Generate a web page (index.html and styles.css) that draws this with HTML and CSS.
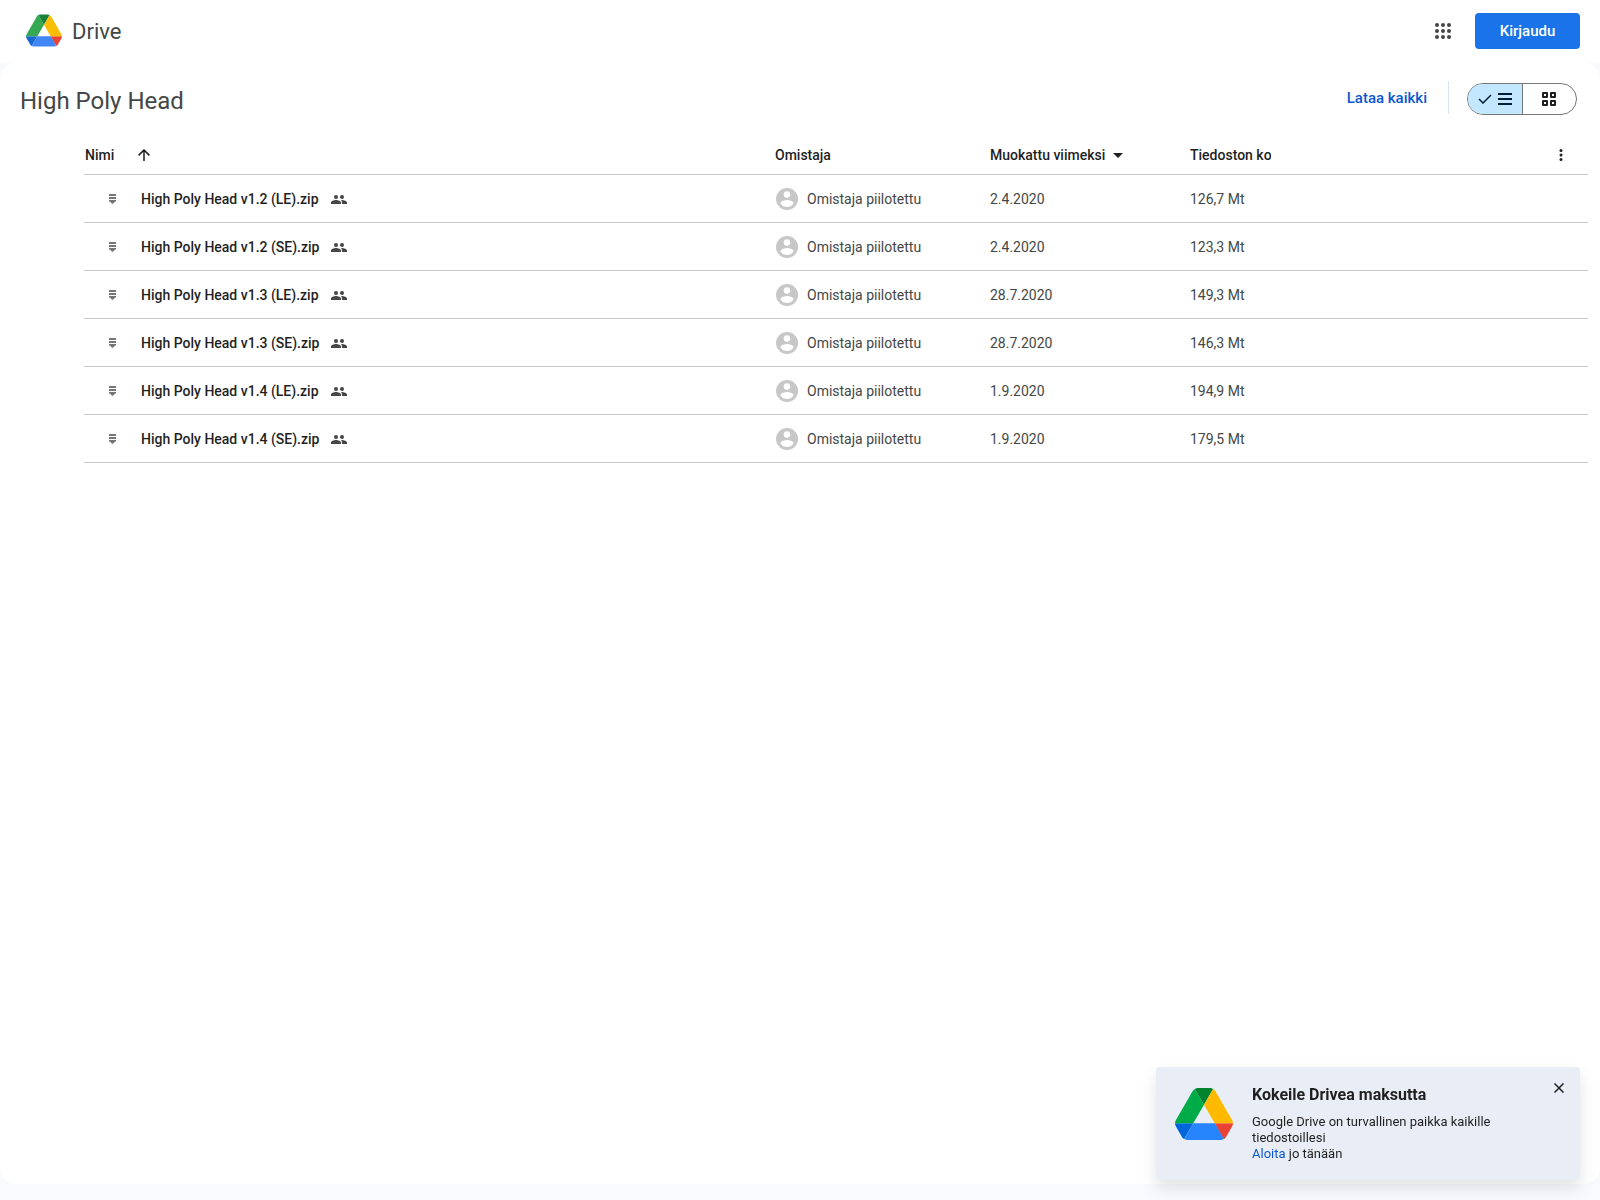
FILE: index.html
```html
<!DOCTYPE html>
<html lang="fi">
<head>
<meta charset="utf-8">
<meta name="viewport" content="width=device-width, initial-scale=1">
<title>High Poly Head – Google Drive</title>
<link rel="stylesheet" href="styles.css">
</head>
<body>
<svg class="defs" aria-hidden="true">
  <symbol id="zip" viewBox="0 0 7 10"><path d="M0 0h7v2H0zM0 3h7v2H0zM0 6h7v1L3.500 10 0 7z"/></symbol>
  <symbol id="people" viewBox="0 0 16 10"><circle cx="5" cy="3" r="2"/><circle cx="11" cy="3" r="2"/><path d="M0 10V8.500C0 7 3 6 5 6s5 1 5 2.500V10zM11 10V8.500C11 7.500 10.600 6.700 10 6.100 12 5.800 16 6.800 16 8.500V10z"/></symbol>
  <symbol id="avatar" viewBox="2 2 20 20"><path d="M12 2a10 10 0 1 0 0 20 10 10 0 0 0 0-20zm0 3a3 3 0 1 1 0 6 3 3 0 0 1 0-6zm0 14.200a7.200 7.200 0 0 1-6-3.220c.03-1.990 4-3.080 6-3.080s5.970 1.090 6 3.080a7.200 7.200 0 0 1-6 3.220z"/></symbol>
</svg>

<header class="topbar">
  <a class="brand" href="#">
    <svg class="brand-logo" viewBox="0 0 87.3 78" aria-hidden="true">
      <path fill="#1967d2" d="m6.600 66.850 3.850 6.650c.8 1.400 1.950 2.500 3.300 3.300l13.750-23.800H0c0 1.550.4 3.100 1.200 4.500z"/>
      <path fill="#34a853" d="M43.650 25 29.900 1.200c-1.350.8-2.500 1.900-3.300 3.300l-25.400 44A9.060 9.060 0 0 0 0 53h27.500z"/>
      <path fill="#ea4335" d="M73.550 76.800c1.350-.8 2.500-1.900 3.300-3.300l9.250-16c.8-1.400 1.200-2.950 1.200-4.500H59.800l5.850 11.500z"/>
      <path fill="#188038" d="M43.650 25 57.400 1.200C56.050.4 54.500 0 52.900 0H34.400c-1.600 0-3.150.45-4.500 1.200z"/>
      <path fill="#4285f4" d="M59.800 53H27.500L13.750 76.800c1.350.8 2.900 1.200 4.500 1.200h50.800c1.600 0 3.150-.45 4.500-1.200z"/>
      <path fill="#fbbc04" d="m73.400 26.500-12.700-22c-.8-1.400-1.950-2.500-3.300-3.300L43.650 25 59.800 53h27.450c0-1.550-.4-3.100-1.200-4.500z"/>
    </svg>
    <span class="brand-name">Drive</span>
  </a>
  <div class="topbar-actions">
    <button class="icon-button" type="button" aria-label="Google-sovellukset">
      <svg width="16" height="16" viewBox="0 0 16 16"><g><circle cx="2" cy="2" r="2"/><circle cx="8" cy="2" r="2"/><circle cx="14" cy="2" r="2"/><circle cx="2" cy="8" r="2"/><circle cx="8" cy="8" r="2"/><circle cx="14" cy="8" r="2"/><circle cx="2" cy="14" r="2"/><circle cx="8" cy="14" r="2"/><circle cx="14" cy="14" r="2"/></g></svg>
    </button>
    <button class="signin" type="button">Kirjaudu</button>
  </div>
</header>

<main class="panel">
  <div class="toolbar">
    <h1>High Poly Head</h1>
    <div class="toolbar-actions">
      <button class="download" type="button">Lataa kaikki</button>
      <div class="view-toggle" role="group" aria-label="Näkymä">
        <button class="view-option selected" type="button" aria-pressed="true" aria-label="Luettelo">
          <svg width="14" height="10" viewBox="0 0 14 10"><path d="M1 5l4 4 8-8" fill="none" stroke="currentColor" stroke-width="1.500"/></svg>
          <svg width="14" height="12" viewBox="0 0 14 12"><path d="M0 0h14v2H0zM0 5h14v2H0zM0 10h14v2H0z"/></svg>
        </button>
        <button class="view-option" type="button" aria-pressed="false" aria-label="Ruudukko">
          <svg width="14" height="14" viewBox="0 0 14 14"><path d="M1 1h4v4H1zM9 1h4v4H9zM1 9h4v4H1zM9 9h4v4H9z" fill="none" stroke="currentColor" stroke-width="2" stroke-linejoin="round"/></svg>
        </button>
      </div>
    </div>
  </div>

  <div class="listing">
  <table class="files">
    <colgroup><col><col class="col-owner"><col class="col-modified"><col class="col-size"></colgroup>
    <thead>
      <tr>
        <th scope="col"><div class="head name-head"><span>Nimi</span>
          <svg width="12" height="12" viewBox="0 0 12 12" aria-hidden="true"><path d="M6 12V1M.600 6.400 6 1l5.400 5.400" fill="none" stroke="currentColor" stroke-width="1.500"/></svg></div></th>
        <th scope="col">Omistaja</th>
        <th scope="col"><div class="head modified-head"><span>Muokattu viimeksi</span>
          <svg width="10" height="5" viewBox="0 0 10 5" aria-hidden="true"><path d="M0 0h10L5 5z"/></svg></div></th>
        <th scope="col"><div class="head size-head"><span class="clipped">Tiedoston koko</span>
          <button class="more" type="button" aria-label="Lisää"><svg width="4" height="12" viewBox="0 0 4 12"><circle cx="2" cy="1.500" r="1.500"/><circle cx="2" cy="6" r="1.500"/><circle cx="2" cy="10.500" r="1.500"/></svg></button></div></th>
      </tr>
    </thead>
    <tbody>
      <tr><td><div class="file"><svg class="zip"><use href="#zip"/></svg><span>High Poly Head v1.2 (LE).zip</span><svg class="people"><use href="#people"/></svg></div></td><td><div class="owner"><svg class="avatar"><use href="#avatar"/></svg><span>Omistaja piilotettu</span></div></td><td>2.4.2020</td><td>126,7 Mt</td></tr>
      <tr><td><div class="file"><svg class="zip"><use href="#zip"/></svg><span>High Poly Head v1.2 (SE).zip</span><svg class="people"><use href="#people"/></svg></div></td><td><div class="owner"><svg class="avatar"><use href="#avatar"/></svg><span>Omistaja piilotettu</span></div></td><td>2.4.2020</td><td>123,3 Mt</td></tr>
      <tr><td><div class="file"><svg class="zip"><use href="#zip"/></svg><span>High Poly Head v1.3 (LE).zip</span><svg class="people"><use href="#people"/></svg></div></td><td><div class="owner"><svg class="avatar"><use href="#avatar"/></svg><span>Omistaja piilotettu</span></div></td><td>28.7.2020</td><td>149,3 Mt</td></tr>
      <tr><td><div class="file"><svg class="zip"><use href="#zip"/></svg><span>High Poly Head v1.3 (SE).zip</span><svg class="people"><use href="#people"/></svg></div></td><td><div class="owner"><svg class="avatar"><use href="#avatar"/></svg><span>Omistaja piilotettu</span></div></td><td>28.7.2020</td><td>146,3 Mt</td></tr>
      <tr><td><div class="file"><svg class="zip"><use href="#zip"/></svg><span>High Poly Head v1.4 (LE).zip</span><svg class="people"><use href="#people"/></svg></div></td><td><div class="owner"><svg class="avatar"><use href="#avatar"/></svg><span>Omistaja piilotettu</span></div></td><td>1.9.2020</td><td>194,9 Mt</td></tr>
      <tr><td><div class="file"><svg class="zip"><use href="#zip"/></svg><span>High Poly Head v1.4 (SE).zip</span><svg class="people"><use href="#people"/></svg></div></td><td><div class="owner"><svg class="avatar"><use href="#avatar"/></svg><span>Omistaja piilotettu</span></div></td><td>1.9.2020</td><td>179,5 Mt</td></tr>
    </tbody>
  </table>
  </div>
</main>

<aside class="promo">
  <svg class="promo-logo" viewBox="0 0 87.3 78" aria-hidden="true">
    <path fill="#0066da" d="m6.600 66.850 3.850 6.650c.8 1.400 1.950 2.500 3.300 3.300l13.750-23.800H0c0 1.550.4 3.100 1.200 4.500z"/>
    <path fill="#00ac47" d="M43.650 25 29.900 1.200c-1.350.8-2.500 1.900-3.300 3.300l-25.400 44A9.060 9.060 0 0 0 0 53h27.500z"/>
    <path fill="#ea4335" d="M73.550 76.800c1.350-.8 2.500-1.900 3.300-3.300l9.250-16c.8-1.400 1.200-2.950 1.200-4.500H59.800l5.850 11.500z"/>
    <path fill="#00832d" d="M43.650 25 57.400 1.200C56.050.4 54.500 0 52.900 0H34.400c-1.600 0-3.150.45-4.500 1.200z"/>
    <path fill="#2684fc" d="M59.800 53H27.500L13.750 76.800c1.350.8 2.900 1.200 4.500 1.200h50.800c1.600 0 3.150-.45 4.500-1.200z"/>
    <path fill="#ffba00" d="m73.400 26.500-12.700-22c-.8-1.400-1.950-2.500-3.300-3.300L43.650 25 59.800 53h27.450c0-1.550-.4-3.100-1.200-4.500z"/>
  </svg>
  <div class="promo-body">
    <h2>Kokeile Drivea maksutta</h2>
    <p>Google Drive on turvallinen paikka kaikille tiedostoillesi<br><a href="#">Aloita</a> jo tänään</p>
  </div>
  <button class="close" type="button" aria-label="Sulje">
    <svg width="10" height="10" viewBox="0 0 10 10"><path d="M.500.500l9 9M9.500.500l-9 9" fill="none" stroke="currentColor" stroke-width="1.500"/></svg>
  </button>
</aside>
</body>
</html>
```
FILE: styles.css
```css
* {
  box-sizing: border-box;
}

body {
  margin: 0;
  min-height: 100vh;
  display: flex;
  flex-direction: column;
  padding-bottom: 16px;
  background: #f8fafd;
  color: #1f1f1f;
  font: 14px/20px "Google Sans", Roboto, sans-serif;
}

button {
  padding: 0;
  border: 0;
  background: none;
  color: inherit;
  font: inherit;
  cursor: pointer;
}

svg {
  display: block;
  flex: none;
  fill: currentColor;
}

.defs {
  position: absolute;
  width: 0;
  height: 0;
}

/* Top bar */
.topbar {
  display: flex;
  align-items: center;
  justify-content: space-between;
  height: 63px;
  padding: 0 20px 2px 26px;
  background: #fff;
}

.brand {
  display: flex;
  align-items: center;
  gap: 10px;
  color: #444746;
  font-size: 22px;
  line-height: 24px;
  text-decoration: none;
}

.brand-logo {
  width: 36px;
  height: 33px;
}

.brand-name {
  padding-top: 2px;
}

.topbar-actions {
  display: flex;
  align-items: center;
  gap: 12px;
}

.icon-button {
  display: grid;
  place-items: center;
  width: 40px;
  height: 40px;
  color: #444746;
}

.signin {
  min-width: 105px;
  height: 36px;
  padding: 0 24px;
  border-radius: 4px;
  background: #1a73e8;
  color: #fff;
  font-size: 15px;
  font-weight: 500;
}

/* Main panel */
.panel {
  flex: 1;
  padding-top: 18px;
  border-radius: 16px;
  background: #fff;
}

.toolbar {
  display: flex;
  align-items: flex-end;
  justify-content: space-between;
  height: 36px;
  padding: 0 23px 0 20px;
}

h1 {
  margin: 0;
  color: #444746;
  font-size: 24px;
  font-weight: 400;
  line-height: 32px;
}

.toolbar-actions {
  display: flex;
  align-self: flex-start;
  align-items: flex-end;
  gap: 18px;
  height: 34px;
}

.download {
  align-self: flex-start;
  height: 33px;
  padding-right: 21px;
  border-right: 1px solid #dde3ea;
  color: #0b57d0;
  font-size: 15px;
  font-weight: 500;
}

.view-toggle {
  display: flex;
  width: 110px;
  height: 32px;
  border: 1px solid #747775;
  border-radius: 16px;
  overflow: hidden;
}

.view-option {
  display: flex;
  flex: 1;
  align-items: center;
  justify-content: center;
  gap: 6px;
}

.view-option.selected {
  border-right: 1px solid #747775;
  background: #c2e7ff;
  color: #001d35;
}

/* File list */
.listing {
  padding: 17px 12px 0 84px;
}

.files {
  width: 100%;
  table-layout: fixed;
  border-collapse: separate;
  border-spacing: 0;
}

.files th {
  height: 41px;
  padding: 2px 0 0;
  border-bottom: 1px solid #c7c7c7;
  font-weight: 500;
  text-align: left;
}

.files td {
  height: 48px;
  padding: 0;
  border-bottom: 1px solid #c7c7c7;
  color: #444746;
}

.head,
.file,
.owner {
  display: flex;
  align-items: center;
}

.name-head {
  gap: 24px;
  padding-left: 1px;
}

.modified-head {
  gap: 8px;
}

.size-head {
  justify-content: space-between;
  padding-right: 15px;
}

.clipped {
  width: 81px;
  overflow: hidden;
  white-space: nowrap;
}

.more {
  display: grid;
  place-items: center;
  width: 24px;
  height: 24px;
}

.col-owner {
  width: 215px;
}

.col-modified {
  width: 200px;
}

.col-size {
  width: 398px;
}

.files .file {
  padding-left: 25px;
  color: #1f1f1f;
  font-weight: 500;
}

.zip {
  width: 7px;
  height: 10px;
  margin-right: 25px;
  color: #747775;
}

.people {
  width: 16px;
  height: 10px;
  margin-left: 12px;
  color: #444746;
}

.owner {
  gap: 9px;
  padding-left: 1px;
}

.avatar {
  width: 22px;
  height: 22px;
  color: #c7c7c7;
}

/* Promo card */
.promo {
  position: fixed;
  right: 20px;
  bottom: 20px;
  display: flex;
  width: 424px;
  padding: 16px 12px 18px 19px;
  gap: 19px;
  border-radius: 4px;
  background: #e9eef6;
  box-shadow: 0 8px 16px rgba(60, 64, 67, .15);
}

.promo-logo {
  width: 58px;
  height: 52px;
  margin-top: 5px;
}

.promo-body {
  flex: 1;
}

.promo h2 {
  margin: 0 0 7px;
  font-size: 16px;
  font-weight: 700;
  line-height: 24px;
}

.promo p {
  margin: 0;
  font-size: 13px;
  line-height: 16px;
}

.promo a {
  color: #0b57d0;
  text-decoration: none;
}

.close {
  display: grid;
  place-items: center;
  align-self: flex-start;
  width: 18px;
  height: 10px;
}
```
